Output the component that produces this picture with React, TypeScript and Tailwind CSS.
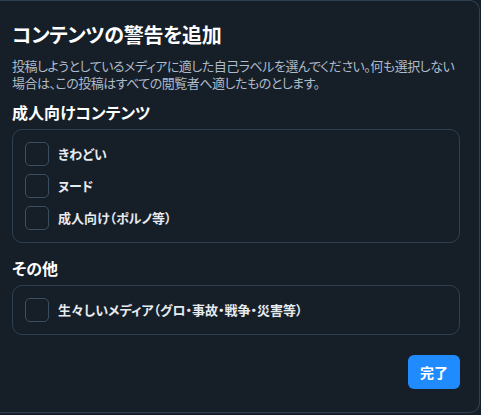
const font = { fontFamily: '"Noto Sans CJK JP", "Noto Sans", sans-serif' };

function Check({ label }: { label: string }) {
  return (
    <label className="flex items-center gap-[9px]">
      <span className="size-6 shrink-0 rounded-[5px] border border-[#3b4f63]" />
      <span className="text-[13px] leading-[18px] font-semibold text-[#e6ebf0]">{label}</span>
    </label>
  );
}

export default function App() {
  return (
    <div className="w-[481px] h-[415px] bg-[#161e27] [font-feature-settings:'palt']" style={font}>
      <div className="w-[480px] h-[413px] border-t border-r border-b border-[#2e4052] rounded-r-[10px] bg-[#161e27] pl-3 pr-[19px] pt-[20px]">
        <h1 className="text-[20px] leading-[28px] font-bold tracking-[-0.3px] text-white">コンテンツの警告を追加</h1>
        <p className="mt-[8px] text-[13px] leading-[17px] tracking-[-0.5px] text-[#aebbc9]">
          投稿しようとしているメディアに適した自己ラベルを選んでください。何も選択しない場合は、この投稿はすべての閲覧者へ適したものとします。
        </p>
        <h2 className="mt-[10px] text-[16px] leading-[22px] font-bold text-white">成人向けコンテンツ</h2>
        <div className="mt-[6px] rounded-[10px] border border-[#2e4052] p-3 flex flex-col gap-2">
          <Check label="きわどい" />
          <Check label="ヌード" />
          <Check label="成人向け（ポルノ等）" />
        </div>
        <h2 className="mt-[14px] text-[16px] leading-[22px] font-bold text-white">その他</h2>
        <div className="mt-[6px] rounded-[10px] border border-[#2e4052] p-3 flex flex-col gap-2">
          <Check label="生々しいメディア（グロ・事故・戦争・災害等）" />
        </div>
        <div className="mt-[20px] flex justify-end">
          <button className="h-[34px] w-[52px] rounded-[6px] bg-[#208bfe] text-[14px] font-bold text-white">完了</button>
        </div>
      </div>
    </div>
  );
}
